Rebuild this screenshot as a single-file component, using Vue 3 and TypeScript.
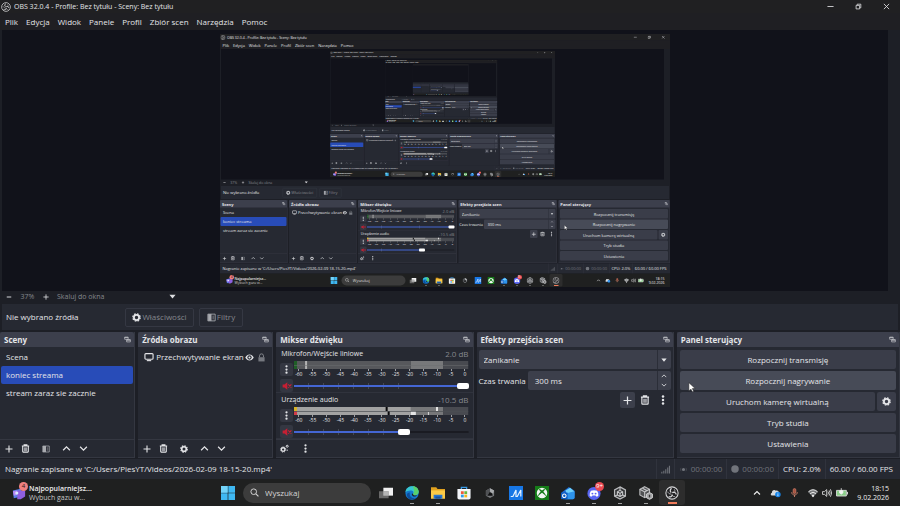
<script setup lang="ts">
import { h, ref, useId } from 'vue'

defineOptions({ name: 'StudioWindow' })

const props = withDefaults(defineProps<{ depth?: number }>(), { depth: 0 })
const maxDepth = 4
const uid = useId()

const icons: Record<string, string> = {
  obs: '<circle cx="8" cy="8" r="7" fill="#202022" stroke="#d6d6d8" stroke-width="1.2"/><path d="M7.600 2.800c-1.900.9-2.200 3.300-.4 4.700M12.800 9.700c-.3-2.100-2.500-3.200-4.500-2.100M4.200 12c1.800 1.100 4 .1 4.200-2.200" fill="none" stroke="#d6d6d8" stroke-width="1.500"/><path d="M3.200 6.500c.4 1.900 2 3 3.900 2.600M10.500 3.700c1.200 1.200 1.200 3-.2 4.200M11.600 12c-1.700.5-3.200-.5-3.500-2.100" fill="none" stroke="#d6d6d8" stroke-width=".8"/>',
  min: '<path d="M1 8h14" stroke="currentColor" stroke-width="1.900"/>',
  restore: '<path d="M2.500 5.500h8v8h-8zM5 5V2.700h8.300V11H11" fill="none" stroke="currentColor" stroke-width="1.800"/>',
  close: '<path d="M2 2l12 12M14 2L2 14" stroke="currentColor" stroke-width="1.900"/>',
  plus: '<path d="M8 1v14M1 8h14" stroke="currentColor" stroke-width="2.200"/>',
  minus: '<path d="M2 8h12" stroke="currentColor" stroke-width="2.600"/>',
  trash: '<path d="M1.500 3.500h13M5.500 3V1.500h5V3M3 4v9.500q0 1 1 1h8q1 0 1-1V4" fill="none" stroke="currentColor" stroke-width="1.900"/><path d="M5 6h6v6.500H5z" fill="currentColor" opacity=".6"/>',
  gear: '<circle cx="8" cy="8" r="4.600" fill="none" stroke="currentColor" stroke-width="3.200"/><circle cx="8" cy="8" r="6.500" fill="none" stroke="currentColor" stroke-width="2.400" stroke-dasharray="2.900 2.205"/>',
  gears: '<circle cx="5.600" cy="9.800" r="3.200" fill="none" stroke="currentColor" stroke-width="2.400"/><circle cx="5.600" cy="9.800" r="4.700" fill="none" stroke="currentColor" stroke-width="1.500" stroke-dasharray="2 1.690"/><circle cx="12.800" cy="4" r="1.800" fill="none" stroke="currentColor" stroke-width="1.700"/><circle cx="12.800" cy="11" r="1.100" fill="currentColor"/>',
  filter: '<path d="M1.500 2h13v12h-13z" fill="none" stroke="currentColor" stroke-width="1.500"/><path d="M2 2h6v12H2z" fill="currentColor"/><path d="M9.500 4.500h3v7h-3z" fill="currentColor" opacity=".4"/>',
  up: '<path d="M2 11l6-6 6 6" fill="none" stroke="currentColor" stroke-width="2.200"/>',
  down: '<path d="M2 5l6 6 6-6" fill="none" stroke="currentColor" stroke-width="2.200"/>',
  caret: '<path d="M1 4h14L8 12.500z" fill="currentColor"/>',
  dots: '<circle cx="8" cy="2.300" r="2" fill="currentColor"/><circle cx="8" cy="8" r="2" fill="currentColor"/><circle cx="8" cy="13.700" r="2" fill="currentColor"/>',
  popout: '<path d="M1.500 2.500h8v5h-8zM6 8.500h8.500v5H6z" fill="none" stroke="currentColor" stroke-width="1.600"/><path d="M1.500 2h8v2h-8zM6 8h8.500v2H6z" fill="currentColor"/>',
  monitor: '<path d="M3 2.500h10q1.500 0 1.500 1.500v6q0 1.500-1.500 1.500H3Q1.500 11.500 1.500 10V4q0-1.500 1.500-1.500z" fill="none" stroke="currentColor" stroke-width="1.800"/><path d="M4.500 13.800h7" stroke="currentColor" stroke-width="1.800"/>',
  eye: '<path d="M.5 8C3.800 1 12.200 1 15.500 8 12.200 15 3.800 15 .5 8z" fill="currentColor"/><circle cx="8" cy="8" r="3.800" fill="#272a33"/><circle cx="8" cy="8" r="1.900" fill="currentColor"/>',
  lock: '<path d="M2.500 7.500h11V15h-11z" fill="currentColor" opacity=".8"/><path d="M4.500 7.500V5a3.500 3.500 0 0 1 7 0v2.500" fill="none" stroke="currentColor" stroke-width="1.600"/>',
  mute: '<path d="M1 5.500h3L8.500 2v12L4 10.500H1z" fill="currentColor"/><path d="M10 5.500l5 5M15 5.500l-5 5" stroke="currentColor" stroke-width="1.900"/>',
  signal: '<path d="M1.500 15v-3M5 15v-5M8.500 15V7.500M12 15V4.500M15 15V1.500" stroke="currentColor" stroke-width="1.900"/>',
  live: '<circle cx="8" cy="8" r="2.800" fill="currentColor"/><path d="M3.600 5q-2 3 0 6M12.400 5q2 3 0 6" fill="none" stroke="currentColor" stroke-width="1" opacity=".6"/>',
  dot: '<circle cx="8" cy="8" r="7.500" fill="currentColor"/>',
  search: '<circle cx="6.600" cy="6.600" r="5" fill="none" stroke="currentColor" stroke-width="1.700"/><path d="M10.500 10.500l4.500 4.500" stroke="currentColor" stroke-width="2"/>',
  widgets: '<path d="M1 5l9-2 1 9-9 2z" fill="#5a7fe8"/><path d="M6 5h9v7l-5 3H6z" fill="#8d5fe0"/><path d="M1 6l5-1v5l-4 1z" fill="#b78af5"/><circle cx="5.500" cy="8" r="1.800" fill="#dceaff"/>',
  windows: '<path d="M0 0h7.600v7.600H0zM8.400 0H16v7.600H8.400zM0 8.400h7.600V16H0zM8.400 8.400H16V16H8.400z" fill="#3fb8f2"/><path d="M0 0h7.600v7.600H0z" fill="#73d3f8"/>',
  taskview: '<path d="M5 2h11v9H5z" fill="#f0f0f0"/><path d="M0 6h11v8H0z" fill="#777" opacity=".85"/><path d="M5 6h6v5H5z" fill="#b5b5b5"/>',
  edge: '<circle cx="8" cy="8" r="7.600" fill="#1479ce"/><path d="M.5 7C1 2.500 4.500.4 8.500.4c4.300 0 7.100 3.100 7.100 6.300 0 2.600-1.900 4-4.100 4-1.900 0-2.500-.7-2.200-1.500 1.400-2.600-.8-4.300-3.300-4C3.600 5.300 1.700 6 .5 7z" fill="#37c6d0"/><path d="M9 .4c4 0 6.600 3 6.600 6.300 0 2.600-1.900 4-4.100 4-1.900 0-2.500-.7-2.200-1.500C11.500 6 10 3 9 .4z" fill="#5ad06c"/><path d="M5.500 7.500c-1 4 2 7 6.500 6.300-3 2.500-9 1.900-10-3.300 0-2 1.500-3 3.500-3z" fill="#0d4e9c"/><path d="M9.200 9.300c.3 1.600 3 1.900 4.900.9-1 2.100-5.600 2.500-6.200-.3-.2-1.100.8-1.900 1.300-.6z" fill="#202020"/>',
  folder: '<path d="M0 1.500h6l1.500 2H16V14H0z" fill="#e0a11f"/><path d="M0 5h16v9.500H0z" fill="#fccb46"/><path d="M3 10h10v4.500H3z" fill="#2675cf"/><path d="M5 12h6v2.500H5z" fill="#1a5298"/>',
  store: '<path d="M5 4V1.500h6V4" fill="none" stroke="#3a9be6" stroke-width="1.500"/><path d="M.5 3.500h15v10q0 2-2 2h-11q-2 0-2-2z" fill="#f2f5f8"/><path d="M4.500 6h3.200v3.200H4.500z" fill="#ef5a38"/><path d="M8.400 6h3.200v3.200H8.400z" fill="#67b73c"/><path d="M4.500 9.900h3.200V13H4.500z" fill="#2e9ce8"/><path d="M8.400 9.900h3.200V13H8.400z" fill="#f7b71d"/>',
  cap: '<path d="M8 1.500l5.500 3v7L8 14.500l-5.500-3v-7z" fill="#77797c"/><path d="M8 1.500l5.500 3L12 9 8 6z" fill="#a9abad"/><path d="M2.500 4.500L8 1.500V6l-4 6-1.500-1z" fill="#505255"/><path d="M7.500 6.500l3.500 2 .5 3H4.500z" fill="#101112"/>',
  slashes: '<path d="M0 0h16v16H0z" fill="#1777e6"/><path d="M2 12h2.500L8 4.500v7.500h1.500L13.500 4.500v7.500" fill="none" stroke="#e6f2ff" stroke-width="1.400"/>',
  xbox: '<path d="M0 0h16v16H0z" fill="#157c18"/><circle cx="8" cy="8" r="6" fill="#f2f7f2"/><path d="M4 3.500C6 3.300 7 4.300 8 5.200c1-.9 2-1.900 4-1.700L9.500 6.500c2 2.100 3.200 4 3.300 5.600C11.500 10.500 9.700 9 8 7.800 6.300 9 4.500 10.500 3.200 12.100c.1-1.600 1.300-3.500 3.300-5.600z" fill="#157c18"/>',
  mail: '<path d="M1 7L9 1l6.500 4.500V13q0 2-2 2H3q-2 0-2-2z" fill="#1b67cf"/><path d="M5 5l5.500-3L15 6v5l-7 1z" fill="#6fd1fb"/><path d="M3 9l12.500-3v7q0 2-2 2H5z" fill="#2e94ec"/><path d="M0 7.500h7.500V15H0z" fill="#0b5bc0"/><circle cx="3.800" cy="11.200" r="2" fill="none" stroke="#fff" stroke-width="1.200"/>',
  discord: '<circle cx="8" cy="8.500" r="7.500" fill="#5865f2"/><path d="M4.500 5.500Q8 4 11.500 5.500q1.800 2.500 1.500 5.500-1.200 1-2.500 1l-.7-1.200H6.200L5.500 12q-1.300 0-2.500-1-.3-3 1.500-5.500z" fill="#fff"/><circle cx="6.200" cy="8.700" r="1.100" fill="#5865f2"/><circle cx="9.800" cy="8.700" r="1.100" fill="#5865f2"/>',
  cube: '<path d="M8 1l6.200 3.500v7L8 15l-6.200-3.500v-7z" fill="#333537" stroke="#b9babc" stroke-width="1.400"/><path d="M8 5l3 1.700v3.500L8 12l-3-1.800V6.700zM8 8.500V12M5 6.700l3 1.800 3-1.800M8 1v4M2 11.500l3-1.300M14 11.500l-3-1.300" fill="none" stroke="#c6c7c9" stroke-width="1.300"/>',
  cubes: '<path d="M6.500.8l5.500 3v6.500l-5.500 3-5.500-3V3.800z" fill="#505254" stroke="#b9babc" stroke-width="1.300"/><path d="M6.500 6.500v6.500M1 3.800l5.500 3 5.500-3M4 2.500l5.500 3" fill="none" stroke="#c6c7c9" stroke-width="1.300"/><path d="M12 7.500l3.500 1.800v4L12 15.300l-3.500-2v-4z" fill="#a5a6a8" stroke="#d7d8d9"/><path d="M12 10v3" stroke="#333" stroke-width="1.500"/>',
  cloud: '<path d="M3.500 12.500C.8 12.500.3 9 2.900 8.200 2.500 5 6.300 3.200 8.500 5.500c2.500-1 4.500.7 4.300 2.800 2 .4 1.800 4.200-.8 4.200z" fill="#d8dadd"/><circle cx="11.500" cy="11" r="4" fill="#1684e8"/><path d="M11.500 10.500v2.800M11.500 8.300v1.200" stroke="#fff" stroke-width="1.100"/>',
  mic: '<path d="M8 1q2.500 0 2.500 2.500v4Q10.500 10 8 10T5.500 7.500v-4Q5.500 1 8 1z" fill="#a65340" stroke="#dc8a72"/><path d="M3 7.500c0 6.500 10 6.500 10 0M8 12.500V16" fill="none" stroke="#dc8a72" stroke-width="1.500"/>',
  wifi: '<path d="M0 6q8-7 16 0l-8 9z" fill="#77797b"/><path d="M.8 6q7.200-6.500 14.400 0M3.300 9q4.700-4.500 9.400 0" fill="none" stroke="#eee" stroke-width="1.500"/><circle cx="8" cy="12.500" r="1.700" fill="#eee"/>',
  speaker: '<path d="M.8 5.800H4L7.500 2.500v11L4 10.200H.8zM9.500 5.500q1.800 2.500 0 5M11.500 3.800q3 4.200 0 8.400M13.500 2q4 6 0 12" fill="none" stroke="#e6e6e6" stroke-width="1.300"/>',
  battery: '<path d="M.7 4.500h13.100v7.500H.7z" fill="#8bce8a" stroke="#d9ddd9" stroke-width="1.200"/><path d="M15.300 6.500v3.500" stroke="#ddd" stroke-width="1.300"/><path d="M7 1.500v5M4.800 5h4.400v3l-2.200 1.500L4.800 8z" fill="#f4f4f4" stroke="#f4f4f4"/>',
  cursor: '<path d="M3 1l10 9.500H8.500l2.200 4.200-2.300 1-2-4.200L3 14z" fill="#fff" stroke="#222" stroke-width=".8"/>',
}

const Icon = (p: { name: string }) =>
  h('svg', { viewBox: '0 0 16 16', class: 'icon', 'aria-hidden': 'true', innerHTML: icons[p.name] })
Icon.props = ['name']

const menus = ['Plik', 'Edycja', 'Widok', 'Panele', 'Profil', 'Zbiór scen', 'Narzędzia', 'Pomoc']
const scenes = ['Scena', 'koniec streama', 'stream zaraz sie zacznie']
const scene = ref('koniec streama')
const marks = [-60, -55, -50, -45, -40, -35, -30, -25, -20, -15, -10, -5, 0]
const channels = ref([
  { name: 'Mikrofon/Wejście liniowe', db: '2.0 dB', level: 100, stereo: false },
  { name: 'Urządzenie audio', db: '-10.5 dB', level: 64, stereo: true },
])
const transition = ref('Zanikanie')
const duration = ref('300 ms')
const apps = [
  { name: 'taskview', label: 'Widok zadań', open: false },
  { name: 'edge', label: 'Edge', open: true },
  { name: 'folder', label: 'Eksplorator', open: true },
  { name: 'store', label: 'Sklep', open: false },
  { name: 'cap', label: 'Narzędzie', open: false },
  { name: 'slashes', label: 'Asystent', open: false },
  { name: 'xbox', label: 'Xbox', open: false },
  { name: 'mail', label: 'Poczta', open: true },
  { name: 'discord', label: 'Discord', open: true, badge: '9+' },
  { name: 'cube', label: 'Hub', open: true },
  { name: 'cubes', label: 'Edytor', open: true },
  { name: 'obs', label: 'OBS', open: true, active: true },
]
</script>

<template>
  <div class="screen" :class="{ nested: props.depth > 0 }">
    <header class="titlebar">
      <Icon name="obs" class="s10" />
      <span class="title">OBS 32.0.4 - Profile: Bez tytułu - Sceny: Bez tytułu</span>
      <div class="winbtns">
        <button aria-label="Minimalizuj"><Icon name="min" class="s7" /></button>
        <button aria-label="Przywróć"><Icon name="restore" class="s7" /></button>
        <button aria-label="Zamknij"><Icon name="close" class="s7" /></button>
      </div>
    </header>
    <nav class="menubar">
      <button v-for="m in menus" :key="m">{{ m }}</button>
    </nav>

    <main class="preview">
      <svg v-if="props.depth < maxDepth" class="canvas" viewBox="0 0 900 506" inert aria-hidden="true">
        <foreignObject width="900" height="506">
          <StudioWindow :depth="props.depth + 1" />
        </foreignObject>
      </svg>
    </main>

    <div class="zoombar">
      <button aria-label="Pomniejsz"><Icon name="minus" class="s6" /></button>
      <span class="percent">37%</span>
      <button aria-label="Powiększ"><Icon name="plus" class="s6" /></button>
      <button class="fit"><span>Skaluj do okna</span><Icon name="caret" class="s7" /></button>
    </div>

    <section class="sourcebar">
      <span class="none">Nie wybrano źródła</span>
      <button><Icon name="gear" class="s9" />Właściwości</button>
      <button class="narrow"><Icon name="filter" class="s9 muted" />Filtry</button>
    </section>

    <div class="docks">
      <section class="dock">
        <h2>Sceny<Icon name="popout" class="s7" /></h2>
        <div class="list">
          <button v-for="s in scenes" :key="s" :class="{ selected: s === scene }" @click="scene = s">{{ s }}</button>
        </div>
        <div class="tools">
          <button aria-label="Dodaj"><Icon name="plus" class="s8" /></button>
          <button aria-label="Usuń"><Icon name="trash" class="s9" /></button>
          <button class="wide" aria-label="Filtry"><Icon name="filter" class="s8 muted" /></button>
          <button aria-label="W górę"><Icon name="up" class="s9" /></button>
          <button aria-label="W dół"><Icon name="down" class="s9" /></button>
        </div>
      </section>

      <section class="dock">
        <h2>Źródła obrazu<Icon name="popout" class="s7" /></h2>
        <div class="list">
          <div class="source">
            <Icon name="monitor" class="s10" />
            <span>Przechwytywanie ekran</span>
            <button aria-label="Widoczność"><Icon name="eye" class="s9" /></button>
            <button aria-label="Blokada"><Icon name="lock" class="s9 dim" /></button>
          </div>
        </div>
        <div class="tools">
          <button aria-label="Dodaj"><Icon name="plus" class="s8" /></button>
          <button aria-label="Usuń"><Icon name="trash" class="s9" /></button>
          <button class="wide" aria-label="Właściwości"><Icon name="gear" class="s8" /></button>
          <button aria-label="W górę"><Icon name="up" class="s9" /></button>
          <button aria-label="W dół"><Icon name="down" class="s9" /></button>
        </div>
      </section>

      <section class="dock">
        <h2>Mikser dźwięku<Icon name="popout" class="s7" /></h2>
        <div v-for="(c, i) in channels" :key="c.name" class="channel">
          <div class="chname">
            <label :for="`${uid}-vol${i}`">{{ c.name }}</label>
            <span>{{ c.db }}</span>
          </div>
          <button class="chip" aria-label="Opcje"><Icon name="dots" class="s9" /></button>
          <div class="meter">
            <svg viewBox="0 0 173 8" preserveAspectRatio="none" aria-hidden="true">
              <rect width="116" height="8" fill="#57585c" />
              <rect x="116" width="32" height="8" fill="#77787a" />
              <rect x="148" width="25" height="8" fill="#484a50" />
              <template v-if="c.stereo">
                <rect width="116" height="8" fill="#a2a2a2" />
                <rect width="3" height="4" fill="#d8b427" />
                <rect y="4" width="3" height="4" fill="#d23b4a" />
                <rect x="91" width="2" height="4" fill="#08080a" />
                <rect x="93" y="4" width="2" height="4" fill="#08080a" />
                <rect x="116" y="4" width="5" height="4" fill="#e4e4e4" />
                <rect x="141" width="2" height="4" fill="#e4e4e4" />
                <rect x="133" y="5" width="1" height="3" fill="#d4d4d4" />
                <rect y="4" width="173" height="1" fill="#4c4e52" opacity=".7" />
              </template>
              <template v-else>
                <rect width="3" height="8" fill="#1f5d27" />
                <rect x="11" width="2" height="8" fill="#b2b2b2" />
                <rect y="4" width="173" height="1" fill="#6c6d70" opacity=".5" />
              </template>
            </svg>
            <div class="scale"><span v-for="m in marks" :key="m">{{ m }}</span></div>
          </div>
          <button class="chip red" aria-label="Wycisz"><Icon name="mute" class="s10" /></button>
          <input :id="`${uid}-vol${i}`" v-model.number="c.level" type="range" min="0" max="100" :style="{ '--level': c.level + '%' }" />
        </div>
        <div class="tools">
          <button aria-label="Zaawansowane"><Icon name="gears" class="s9" /></button>
          <button class="wide" aria-label="Menu"><Icon name="dots" class="s9" /></button>
        </div>
      </section>

      <section class="dock">
        <h2>Efekty przejścia scen<Icon name="popout" class="s7" /></h2>
        <div class="effects">
          <div class="field">
            <select v-model="transition" aria-label="Efekt przejścia"><option>Zanikanie</option></select>
            <span class="arrow"><Icon name="caret" class="s6" /></span>
          </div>
          <div class="row">
            <label :for="`${uid}-time`">Czas trwania</label>
            <div class="field">
              <input :id="`${uid}-time`" v-model="duration" type="text" />
              <span class="arrow spin">
                <button aria-label="Więcej"><Icon name="up" class="s6" /></button>
                <button aria-label="Mniej"><Icon name="down" class="s6" /></button>
              </span>
            </div>
          </div>
          <div class="actions">
            <button class="filled" aria-label="Dodaj"><Icon name="plus" class="s9" /></button>
            <button aria-label="Usuń"><Icon name="trash" class="s10" /></button>
            <button aria-label="Opcje"><Icon name="dots" class="s10" /></button>
          </div>
        </div>
      </section>

      <section class="dock">
        <h2>Panel sterujący<Icon name="popout" class="s7" /></h2>
        <div class="controls">
          <button>Rozpocznij transmisję</button>
          <button class="hover">Rozpocznij nagrywanie<Icon name="cursor" class="s10 pointer" /></button>
          <div class="pair">
            <button>Uruchom kamerę wirtualną</button>
            <button aria-label="Ustawienia kamery"><Icon name="gear" class="s9" /></button>
          </div>
          <button>Tryb studia</button>
          <button>Ustawienia</button>
        </div>
      </section>
    </div>

    <footer class="status">
      <span class="message">Nagranie zapisane w 'C:/Users/PiesYT/Videos/2026-02-09 18-15-20.mp4'</span>
      <span class="cell off"><Icon name="signal" class="s9" /></span>
      <span class="cell off"><Icon name="live" class="s9" />00:00:00</span>
      <span class="cell off"><Icon name="dot" class="s8" />00:00:00</span>
      <span class="cell">CPU: 2.0%</span>
      <span class="cell">60.00 / 60.00 FPS</span>
    </footer>

    <div class="taskbar">
      <button class="news">
        <span class="newsicon"><Icon name="widgets" class="s14" /><b class="badge">4</b></span>
        <span class="newstext"><strong>Najpopularniejsz...</strong><span>Wybuch gazu w...</span></span>
      </button>
      <div class="center">
        <button class="app" aria-label="Start"><Icon name="windows" class="s14" /></button>
        <label class="search"><Icon name="search" class="s9" /><input type="text" value="Wyszukaj" aria-label="Wyszukaj" /></label>
        <div class="apps">
          <button v-for="a in apps" :key="a.name" class="app" :class="{ open: a.open, active: a.active }" :aria-label="a.label">
            <Icon :name="a.name" :class="a.name === 'cap' ? 's12' : 's14'" /><b v-if="a.badge" class="badge">{{ a.badge }}</b>
          </button>
        </div>
      </div>
      <div class="tray">
        <Icon name="up" class="s8" />
        <Icon name="cloud" class="s11" />
        <Icon name="mic" class="s9" />
        <span class="net"><Icon name="wifi" class="s10" /><Icon name="speaker" class="s10" /><Icon name="battery" class="s12" /></span>
        <time>18:15<br />9.02.2026</time>
      </div>
    </div>
  </div>
</template>

<style>
body { margin: 0; background: #1d1f26; }
</style>

<style scoped>
.screen {
  box-sizing: border-box;
  display: flex;
  flex-direction: column;
  width: 100%;
  height: 100vh;
  overflow: hidden;
  background: #1d1f26;
  color: #e4e5e8;
  font: 8px/12px "Open Sans", "Noto Sans", sans-serif;
}
.screen.nested { height: 100%; }
.screen *, .screen *::before { box-sizing: border-box; }
button, input, select { font: inherit; color: inherit; background: none; border: 0; margin: 0; padding: 0; min-width: 0; outline: 0; }
button { display: inline-flex; align-items: center; justify-content: center; white-space: nowrap; }
.icon { display: block; flex: none; }
.s6 { width: 6px; height: 6px; }
.s7 { width: 7px; height: 7px; }
.s8 { width: 8px; height: 8px; }
.s9 { width: 9px; height: 9px; }
.s10 { width: 10px; height: 10px; }
.s11 { width: 11px; height: 11px; }
.s12 { width: 12px; height: 12px; }
.s14 { width: 14px; height: 14px; }
.muted { color: #a9abb0; }
.dim { color: #8a8c92; }

.titlebar { display: flex; align-items: center; gap: 3px; height: 13px; padding-left: 1px; background: #202022; flex: none; }
.title { flex: 1; white-space: nowrap; font-size: 7px; }
.winbtns { display: flex; }
.winbtns button { width: 28px; height: 13px; }
.menubar { display: flex; align-items: center; gap: 8px; height: 17px; padding-left: 5px; background: #1f1f23; flex: none; }

.preview { flex: 1; min-height: 0; margin: 0 12px 0 2px; padding: 4px 0; background: #11121a; }
.canvas { display: block; width: 100%; height: 100%; }

.zoombar { display: flex; align-items: center; height: 11px; margin-bottom: 1px; padding-left: 5px; flex: none; color: #dcdde0; }
.zoombar > button { width: 8px; height: 11px; }
.percent { width: 29px; text-align: center; color: #85878d; font-size: 7px; }
.zoombar > .fit { width: 119px; margin-left: 7px; justify-content: space-between; font-size: 7px; }
.fit span { color: #85878d; }

.sourcebar { display: flex; align-items: center; gap: 5px; height: 26px; margin: 1px 2px 2px; padding-left: 4px; background: #262932; flex: none; }
.none { width: 114px; }
.sourcebar button { width: 69px; height: 19px; gap: 1px; border: 1px solid #353843; border-radius: 2px; color: #85878d; }
.sourcebar button .s9:not(.muted) { color: #e4e5e8; }
.sourcebar .narrow { width: 44px; }

.docks { display: grid; grid-template-columns: 135fr 135fr 197fr 197fr 223fr; gap: 3px; flex: none; }
.dock { display: flex; flex-direction: column; min-width: 0; background: #262932; border: solid #343741; border-width: 0 1px 1px 0; }
h2 { display: flex; align-items: center; justify-content: space-between; height: 15px; margin: 0; padding: 0 3px 0 4px; background: #3c3f4c; border-radius: 2px 2px 0 0; font-size: 8px; font-weight: 700; }
h2 .icon { color: #c2c3c8; }
.list { flex: 1; padding: 1px; }
.list > button { display: flex; justify-content: flex-start; width: 100%; height: 18px; padding: 0 5px; border-radius: 2px; line-height: 16px; }
.list > .selected { background: #284cb8; }
.source { display: flex; align-items: center; gap: 2px; height: 18px; padding: 0 6px 0 5px; }
.source span { flex: 1; white-space: nowrap; }
.source button + button { margin-left: 3px; }
.tools { display: flex; align-items: center; height: 18px; border-top: 1px solid #343741; }
.tools button { width: 17px; height: 17px; }
.tools .wide { width: 24px; }

.channel { display: grid; grid-template-columns: 13px 1fr; column-gap: 1px; grid-template-rows: 14px 17px 15px; height: 46px; padding: 0 4px; border-bottom: 1px solid #30333d; align-items: start; }
.chname { grid-column: 1 / -1; display: flex; justify-content: space-between; line-height: 14px; font-size: 7px; padding-left: 1px; }
.chname span { font-size: 8px; color: #85878d; }
.chip { height: 13px; background: #343742; border-radius: 2px; align-self: center; }
.red { color: #c61f33; }
.meter svg { display: block; width: 100%; height: 8px; }
.scale { display: flex; justify-content: space-between; font-size: 5px; line-height: 8px; padding-left: 1px; }
.scale span { display: flex; flex-direction: column; align-items: center; width: 7px; }
.scale span::before { content: ""; width: 1px; height: 2px; margin-bottom: -1px; background: #9c9ea3; }
.channel input { appearance: none; width: 100%; height: 13px; align-self: center; }
.channel input::-webkit-slider-runnable-track {
  height: 6px;
  background:
    linear-gradient(to right, #4466d4 var(--level), #1a1b22 var(--level)) center / 100% 2px no-repeat,
    repeating-linear-gradient(to right, transparent 0 14px, #464954 14px 15px) left / 65% 6px no-repeat;
}
.channel input::-webkit-slider-thumb { appearance: none; width: 12px; height: 6px; border-radius: 2px; background: #fff; }

.effects { display: flex; flex-direction: column; gap: 2px; padding: 3px 2px; }
.field { display: flex; flex: 1; height: 19px; background: #3c3f4b; border-radius: 2px; }
.effects > .field { flex: none; }
.field select, .field input { flex: 1; width: 0; height: 19px; padding: 0 5px; appearance: none; }
.row { display: flex; align-items: center; gap: 2px; }
.row .field input { padding: 0 7px; }
.arrow { display: flex; align-items: center; justify-content: center; width: 14px; border-left: 1px solid #2b2e38; pointer-events: none; }
.spin { flex-direction: column; pointer-events: auto; }
.spin button { height: 9px; }
.actions { display: flex; justify-content: flex-end; gap: 3px; }
.actions button { width: 15px; height: 16px; border-radius: 2px; }
.actions .filled { background: #3c3f4b; }

.controls { display: flex; flex-direction: column; gap: 2px; padding: 3px 3px 4px; }
.controls button { position: relative; height: 19px; flex: 1 0 19px; background: #3a3d49; border-radius: 2px; }
.controls .hover { background: #474b57; }
.pair { display: flex; gap: 2px; }
.pair button + button { flex: 0 0 19px; }
.pointer { position: absolute; left: 7px; top: 11px; z-index: 1; }

.status { display: flex; align-items: stretch; height: 20px; margin-top: 1px; padding: 0 3px 0 5px; background: #262932; line-height: 20px; flex: none; white-space: nowrap; }
.message { flex: 1; }
.cell { display: flex; align-items: center; gap: 3px; padding: 0 4px; border-left: 1px solid #30333d; }
.off { color: #71747b; }

.taskbar { display: grid; grid-template-columns: 1fr auto 1fr; align-items: center; height: 27px; background: #1f2020; flex: none; color: #eeeeee; }
.news { justify-self: start; gap: 3px; padding-left: 12px; text-align: left; font-size: 7px; line-height: 9px; }
.newsicon { position: relative; display: block; }
.newstext { display: flex; flex-direction: column; }
.newstext strong { font-weight: 600; }
.newstext > span { color: #c6c6c6; }
.badge { position: absolute; right: -2px; top: -4px; min-width: 9px; height: 9px; border-radius: 5px; background: #f0807f; color: #251416; font-size: 6px; line-height: 9px; font-weight: 400; text-align: center; }
.center { display: flex; align-items: center; gap: 2px; }
.app { position: relative; width: 26px; height: 25px; border-radius: 3px; }
.app .badge { right: 3px; top: 2px; background: #ea4a52; color: #fff; }
.open::before { content: ""; position: absolute; bottom: 1px; left: 11px; width: 4px; height: 1px; background: #a0a0a0; }
.active { background: #2d2d2d; }
.active::before { left: 9px; width: 9px; height: 2px; background: #ef7b5a; }
.apps { display: flex; }
.search { display: flex; align-items: center; gap: 6px; width: 128px; height: 20px; padding: 0 7px; border-radius: 10px; background: #3c3c3c; color: #d5d5d5; }
.search input { flex: 1; width: 0; }
.tray { display: flex; align-items: center; justify-content: flex-end; gap: 9px; padding-right: 11px; }
.net { display: flex; align-items: center; gap: 4px; }
time { text-align: right; font-size: 7px; line-height: 9px; }
</style>
